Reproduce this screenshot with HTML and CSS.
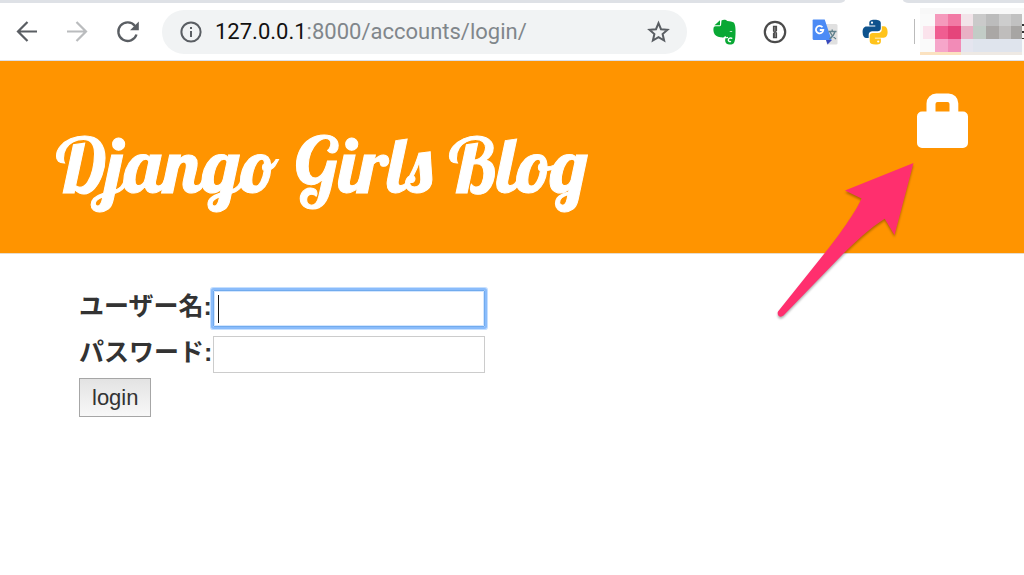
FILE: index.html
```html
<!DOCTYPE html>
<html lang="ja">
<head>
    <meta charset="utf-8">
    <title>Django Girls Blog</title>
    <meta name="viewport" content="width=device-width, initial-scale=1.0">
    <link rel="stylesheet" href="styles.css">
</head>
<body>
    <div class="tab-strip">
        <div class="tabs-left"></div>
        <div class="tabs-right"></div>
    </div>

    <nav class="toolbar">
        <button class="tool" type="button" aria-label="Back">
            <svg width="24" height="24" viewBox="0 0 24 24" fill="none" stroke="#5a5e63" stroke-width="2.2">
                <path d="M22 11.500H3M12.500 2L3 11.500l9.500 9.500"/>
            </svg>
        </button>
        <button class="tool" type="button" aria-label="Forward">
            <svg width="24" height="24" viewBox="0 0 24 24" fill="none" stroke="#babcbe" stroke-width="2.2">
                <path d="M2 11.500h19M11.500 2L21 11.500l-9.500 9.500"/>
            </svg>
        </button>
        <button class="tool" type="button" aria-label="Reload">
            <svg width="24" height="24" viewBox="0 0 24 24">
                <path d="M20 6A9.300 9.300 0 1 0 21.500 14.500" fill="none" stroke="#5a5e63" stroke-width="2.300"/>
                <path d="M23.800 1.500v8.700h-8.700z" fill="#5a5e63"/>
            </svg>
        </button>

        <div class="address">
            <svg class="info" width="24" height="24" viewBox="0 0 24 24">
                <circle cx="13" cy="12" r="9.600" fill="none" stroke="#5a5e63" stroke-width="2"/>
                <path d="M12 11h2v6h-2zM12 7h2v2h-2z" fill="#5a5e63"/>
            </svg>
            <div class="url">127.0.0.1<span>:8000/accounts/login/</span></div>
            <button class="star" type="button" aria-label="Bookmark">
                <svg width="24" height="24" viewBox="0 0 24 24" fill="none" stroke="#5a5e63" stroke-width="2">
                    <path d="M11.500 3.200l2.500 6 6.500.600-4.900 4.300 1.500 6.400-5.600-3.400-5.600 3.400 1.500-6.400L2.500 9.800l6.500-.600z"/>
                </svg>
            </button>
        </div>

        <div class="extensions">
            <button class="tool" type="button" aria-label="Evernote">
                <svg width="26" height="26" viewBox="0 0 26 26">
                    <path d="M9.500 1.500C11 .300 14 .300 15.300 2c2.500.200 5 .500 6.400 1.600 1.600 1.500 2.100 6.200 1.800 11.400-.2 4.500-.6 7.800-1.700 9.200-1.500 1.700-5.600 1.700-7.400.2-1.500-1.300-1.600-4.200-.6-5.700l-.6-1.500c-1 1.300-2.700 1.400-4.700 1.100-3.600-.500-5.800-1.800-6.600-4.500-.7-2.300-.6-4.800 0-5.800.4-.5.900-.8 1.600-.8h4.200c.9 0 1.400-.5 1.400-1.400z" fill="#09a834"/>
                    <path d="M8 1.200v5H2.500z" fill="#09a834"/>
                    <path d="M13 17.500c.500 1.500 2 1.500 3 .8" fill="none" stroke="#fff" stroke-width="1.200"/>
                    <path d="M20.300 19.500c-1.500-1-4-.5-4 1.500 0 1.500 1.500 2 2.700 1.300" fill="none" stroke="#fff" stroke-width="1.400"/>
                    <path d="M17.200 12.600c1-.900 2.500-.700 3.300.3-1 .2-2 .1-3.300-.3z" fill="#fff"/>
                </svg>
            </button>
            <button class="tool" type="button" aria-label="1Password">
                <svg width="26" height="26" viewBox="0 0 26 26">
                    <circle cx="13" cy="13" r="10.200" fill="#fff" stroke="#4b4b4b" stroke-width="2.200"/>
                    <path d="M10.900 6.800h4.200v5l-1 1 1 1v5.400h-4.200v-5l1-1-1-1z" fill="#4b4b4b"/>
                    <path d="M12.800 8v4.500M13.300 13.500V18" stroke="#aaa" stroke-width=".7"/>
                </svg>
            </button>
            <button class="tool" type="button" aria-label="Translate">
                <svg width="26" height="26" viewBox="0 0 26 26">
                    <path d="M10 5h14q1.500 0 1.500 1.500v18q0 1-1.500 1H15z" fill="#e0e0e0"/>
                    <path d="M14 21h6l-4.500 4.500z" fill="#3749bd"/>
                    <path d="M1.500.600h11.200L19.600 21H2Q.600 21 .600 19.500v-18Q.600.600 1.500.600z" fill="#4c8bf5"/>
                    <path d="M10.500 8.300A3.700 3.700 0 1 0 11.300 11H7.800" fill="none" stroke="#fff" stroke-width="1.800"/>
                    <path d="M16.500 12.500h8M20.200 10.500v2M23 12.500q-1.500 5-5.500 7.500M18 13q2 4.500 6 7" fill="none" stroke="#60818c" stroke-width="1.300"/>
                </svg>
            </button>
            <button class="tool" type="button" aria-label="Python">
                <svg width="26" height="26" viewBox="0 0 26 26">
                    <path d="M12.900.700C7.500.700 7.300 2.600 7.300 4v2.600h6V7.500H4.600C1.800 7.500.600 9.800.600 13.200c0 3.700 1.600 5.800 3.800 5.800h2.300v-3.200c0-2 1.600-3.500 3.600-3.500h5.500c1.700 0 3-1.300 3-3V4c0-2.300-2.500-3.300-5.900-3.300z" fill="#0d528d"/>
                    <path d="M13.300 25.500c5.400 0 5.600-1.900 5.600-3.300v-2.600h-6v-.900h8.700c2.800 0 4-2.300 4-5.700 0-3.700-1.600-5.700-3.800-5.700h-2v3.100c0 2-1.600 3.500-3.600 3.500h-5.500c-1.700 0-3 1.300-3 3v5.300c0 2.300 2.200 3.300 5.600 3.300z" fill="#ffc31b"/>
                    <circle cx="10" cy="3.700" r="1.100" fill="#fff"/>
                    <circle cx="16.200" cy="22.500" r="1.100" fill="#fff"/>
                </svg>
            </button>
        </div>

        <div class="divider"></div>

        <svg class="profile" width="104" height="47" viewBox="0 0 104 47" shape-rendering="crispEdges">
            <path d="M0 0h104v47H0z" fill="#fafafa"/>
            <path d="M0 0h104v6H0z" fill="#f8f8f8"/>
            <path d="M15 6h13v12H15z" fill="#f59abc"/>
            <path d="M28 6h13v12H28z" fill="#f27aa5"/>
            <path d="M41 6h12v12H41z" fill="#f2e4e9"/>
            <path d="M53 6h13v12H53z" fill="#cacaca"/>
            <path d="M66 6h13v12H66z" fill="#bcbcbc"/>
            <path d="M79 6h12v12H79z" fill="#cdcdcd"/>
            <path d="M91 6h11v12H91z" fill="#c1c1c1"/>
            <path d="M3 18h12v13H3z" fill="#fbe3ec"/>
            <path d="M15 18h13v13H15z" fill="#f05d91"/>
            <path d="M28 18h13v13H28z" fill="#e5457b"/>
            <path d="M41 18h12v13H41z" fill="#e9b0c4"/>
            <path d="M53 18h13v13H53z" fill="#c2ccc6"/>
            <path d="M66 18h13v13H66z" fill="#aaa7a5"/>
            <path d="M79 18h12v13H79z" fill="#bfbdbc"/>
            <path d="M91 18h11v13H91z" fill="#a7a5a3"/>
            <path d="M15 31h13v13H15z" fill="#f6a6ca"/>
            <path d="M28 31h13v13H28z" fill="#f28bb7"/>
            <path d="M41 31h12v13H41z" fill="#e5e5ef"/>
            <path d="M53 31h49v13H53z" fill="#dfe4ed"/>
            <path d="M0 44h41v3H0z" fill="#fbe2c0"/>
            <path d="M41 44h61v3H41z" fill="#eee9e4"/>
            <path d="M102 16h2v2h-2zM102 23h2v2h-2zM102 30h2v1h-2z" fill="#333"/>
        </svg>
    </nav>

    <header class="page-header">
        <h1><a href="/">Django Girls Blog</a></h1>
        <a class="lock" href="/accounts/login/" aria-label="Login">
            <svg width="51" height="56" viewBox="0 0 51 56">
                <path fill="#fff" fill-rule="evenodd" d="M5 18.500h4.500V10.500A9.800 9.800 0 0 1 19.300.500H31.500a9.800 9.800 0 0 1 9.800 9.800v8.200H46a5 5 0 0 1 5 5v26.500a5 5 0 0 1-5 5H5a5 5 0 0 1-5-5V23.500a5 5 0 0 1 5-5zM18.500 18.500H32.500v-7.500a2 2 0 0 0-2-2H20.500a2 2 0 0 0-2 2z"/>
            </svg>
        </a>
        <svg class="arrow" width="150" height="170" viewBox="770 155 150 170">
            <path d="M913.500 163L845 190.500l16.500 8C857 210 838 237 824 254L778 311.500C776.500 315 780 318.500 783.500 315.500L844 253C854 243 870 228 884.700 218.800L894.500 235z" fill="#ff2f6e"/>
        </svg>
    </header>

    <main class="content">
        <form class="login-form" onsubmit="return false">
            <div class="field">
                <label for="id_username">ユーザー名:</label>
                <input class="active" type="text" id="id_username" name="username">
            </div>
            <div class="field">
                <label for="id_password">パスワード:</label>
                <input type="password" id="id_password" name="password">
            </div>
            <button class="login-btn" type="submit">login</button>
        </form>
    </main>
</body>
</html>
```

FILE: styles.css
```css
body {
    margin: 0;
    background: #fff;
    color: #333;
    font-family: "Liberation Sans", "Noto Sans CJK JP", sans-serif;
}
button {
    cursor: pointer;
}

/* browser bar */
.tab-strip {
    display: flex;
    justify-content: space-between;
    height: 3px;
}
.tabs-left, .tabs-right {
    background: #dee1e6;
}
.tabs-left {
    flex: 1;
    margin-right: 58px;
    border-bottom-right-radius: 6px 3px;
}
.tabs-right {
    width: 121px;
    border-bottom-left-radius: 6px 3px;
}
.toolbar {
    display: flex;
    align-items: center;
    height: 57px;
    padding-left: 2px;
    border-bottom: 1px solid #dcdfe8;
}
.tool {
    display: flex;
    align-items: center;
    justify-content: center;
    width: 50px;
    height: 44px;
    padding: 0;
    border: none;
    background: none;
}
.address {
    display: flex;
    align-items: center;
    flex: 1;
    height: 44px;
    margin: 0 13px 0 10px;
    padding: 0 16px;
    border-radius: 22px;
    background: #f1f3f4;
}
.url {
    flex: 1;
    margin-left: 13px;
    color: #111;
    font-family: Roboto, sans-serif;
    font-size: 22px;
}
.url span {
    color: #80868b;
}
.star {
    display: flex;
    padding: 0;
    border: none;
    background: none;
}
.extensions {
    display: flex;
}
.divider {
    width: 1px;
    height: 25px;
    margin: 0 5px 0 14px;
    background: #bbb;
}
.profile {
    flex: none;
}

/* page */
.page-header {
    position: relative;
    display: flex;
    justify-content: space-between;
    align-items: flex-start;
    padding: 32px 56px 48px;
    background: #ff9400;
    border-bottom: 1px solid #e8dccb;
}
.page-header h1 {
    margin: 32px 0 0;
    font-family: Lobster, cursive;
    font-size: 76px;
    font-weight: normal;
    line-height: 80px;
    -webkit-text-stroke: 1px #fff;
}
.page-header h1 a {
    color: #fff;
    text-decoration: none;
}
.lock svg {
    display: block;
}
.arrow {
    position: absolute;
    top: 94px;
    right: 104px;
    filter: drop-shadow(0 2px 1px rgba(0,0,0,0.3));
}
.content {
    padding: 36px 79px;
}
.login-form {
    display: flex;
    flex-direction: column;
    align-items: flex-start;
    gap: 9px;
}
.field {
    display: flex;
    align-items: flex-start;
    gap: 2px;
}
.field label {
    width: 132px;
    font-size: 25px;
    font-weight: bold;
    line-height: 32px;
    white-space: nowrap;
}
.field input {
    box-sizing: border-box;
    width: 272px;
    height: 37px;
    padding: 2px 4px;
    border: 1px solid #ccc;
    font-size: 22px;
    outline: none;
}
.field input.active {
    border: 1px solid #71abee;
    border-radius: 1px;
    box-shadow: 0 0 0 2px #8abcfb, 0 0 0 3px #c5dffe, inset 0 0 0 1px #d3e6fe;
    /* text cursor */
    background: linear-gradient(#111, #111) 4px 4px / 1px 28px no-repeat;
}
.login-btn {
    height: 39px;
    margin-top: -4px;
    padding: 0 12px;
    border: 1px solid #a6a6a6;
    background: linear-gradient(#e3e3e3, #f8f8f8);
    color: #333;
    font-family: "Liberation Sans", sans-serif;
    font-size: 22px;
}
```
